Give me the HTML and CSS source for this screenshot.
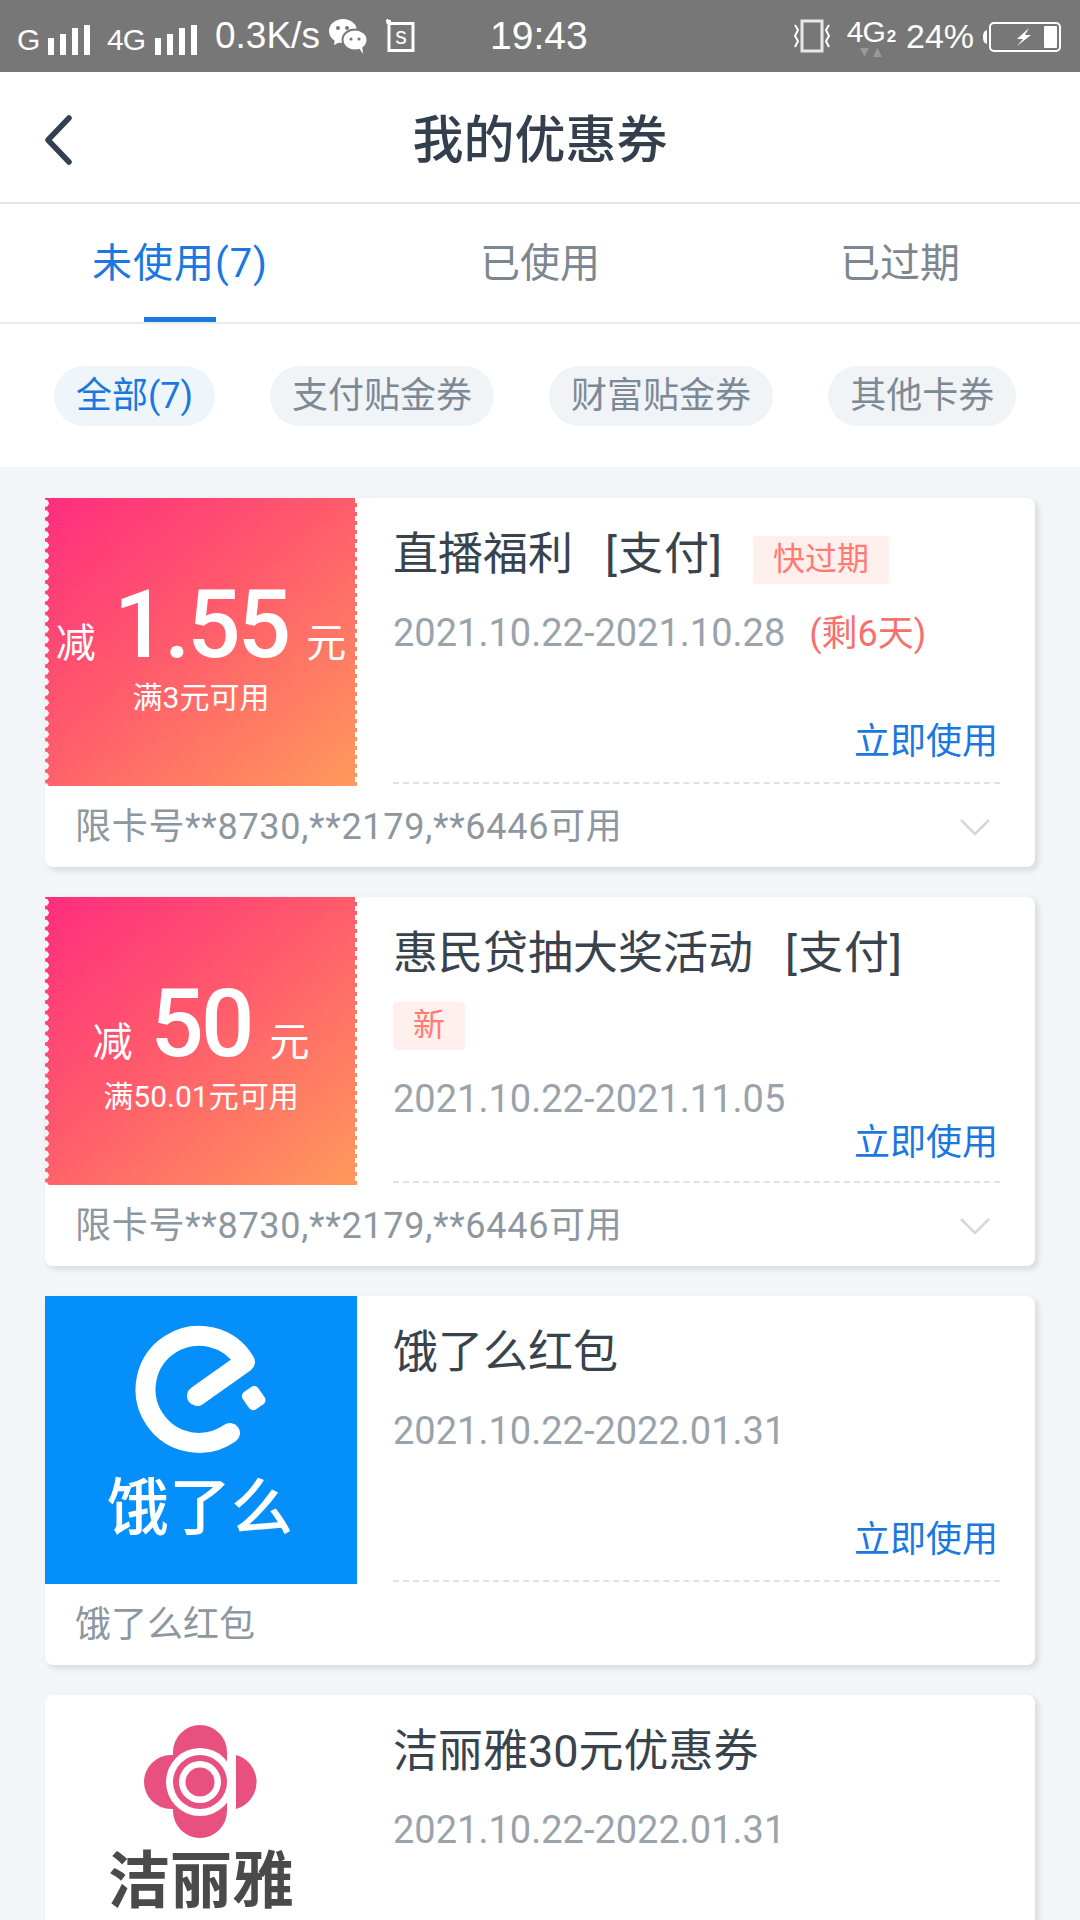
FILE: index.html
```html
<!DOCTYPE html>
<html lang="zh-CN">
<head>
<meta charset="UTF-8">
<meta name="viewport" content="width=device-width, initial-scale=1.0">
<title>我的优惠券</title>
<link rel="stylesheet" href="styles.css">
</head>
<body>

<!-- Status bar -->
<div class="status-bar">
  <span class="st-g">G</span>
  <svg class="st-signal" width="42" height="30" viewBox="0 0 42 30"><path d="M0 13h6v17H0zM12 9h6v21h-6zM24 3h6v27h-6zM36 0h6v30h-6z" fill="#fff"/></svg>
  <span class="st-4g">4G</span>
  <svg class="st-signal" width="42" height="30" viewBox="0 0 42 30"><path d="M0 13h6v17H0zM12 9h6v21h-6zM24 3h6v27h-6zM36 0h6v30h-6z" fill="#fff"/></svg>
  <span class="st-speed">0.3K/s</span>
  <svg class="st-wechat" width="38" height="35" viewBox="0 0 38 35">
    <ellipse cx="14" cy="12" rx="14" ry="12" fill="#fff"/>
    <path d="M6 19l-1 7 8-4z" fill="#fff"/>
    <ellipse cx="26" cy="21" rx="12.500" ry="10.500" fill="#fff" stroke="#777" stroke-width="2"/>
    <path d="M30 29l4 6-1-9z" fill="#fff"/>
    <circle cx="9" cy="9" r="2" fill="#777"/><circle cx="18" cy="9" r="2" fill="#777"/>
    <circle cx="22" cy="20" r="1.600" fill="#777"/><circle cx="30" cy="20" r="1.600" fill="#777"/>
  </svg>
  <svg class="st-sim" width="30" height="36" viewBox="0 0 30 36">
    <path d="M4 5.500h24v27H4z" fill="none" stroke="#fff" stroke-width="3"/>
    <path d="M1 3h5M2.500 1v5" fill="none" stroke="#fff" stroke-width="2"/>
    <text x="16" y="26" font-size="23" text-anchor="middle" fill="#fff" font-family="'Liberation Sans', sans-serif">s</text>
  </svg>
  <span class="st-time">19:43</span>
  <svg class="st-vibrate" width="38" height="34" viewBox="0 0 38 34">
    <rect x="9" y="2" width="20" height="30" fill="none" stroke="#e8e8e8" stroke-width="3"/>
    <path d="M2 6l3 5-3 6 3 5-3 6M36 6l-3 5 3 6-3 5 3 6" fill="none" stroke="#fff" stroke-width="2"/>
  </svg>
  <div class="st-net">
    <span class="st-net-txt">4G<small>2</small></span>
    <svg width="24" height="11" viewBox="0 0 24 11"><path d="M1 1h9l-4.500 9zM14 10h9l-4.500-9z" fill="#999"/></svg>
  </div>
  <span class="st-batt-txt">24%</span>
  <svg class="st-batt" width="78" height="30" viewBox="0 0 78 30">
    <path d="M4 8v14c-3-1-4-3-4-7s1-6 4-7z" fill="#fff"/>
    <rect x="7" y="1" width="70" height="28" rx="4" fill="none" stroke="#fff" stroke-width="2"/>
    <path d="M46 6l-12 11h6l-6 7 14-11h-6z" fill="#fff"/>
    <rect x="61" y="4" width="13" height="22" rx="1" fill="#fff"/>
  </svg>
</div>

<!-- Title bar -->
<div class="nav-bar">
  <svg class="nav-back" width="28" height="50" viewBox="0 0 28 50"><path d="M24 3L3 25l21 22" fill="none" stroke="#33404f" stroke-width="5.500" stroke-linecap="round" stroke-linejoin="round"/></svg>
  <div class="nav-title">我的优惠券</div>
</div>

<!-- Tabs -->
<div class="tabs">
  <div class="tab active">未使用(7)</div>
  <div class="tab">已使用</div>
  <div class="tab">已过期</div>
</div>

<!-- Filter chips -->
<div class="chips">
  <div class="chip active">全部(7)</div>
  <div class="chip">支付贴金券</div>
  <div class="chip">财富贴金券</div>
  <div class="chip">其他卡券</div>
</div>

<div class="coupon-list">

  <div class="coupon">
    <div class="coupon-main">
      <div class="coupon-left grad">
        <div class="amount"><span class="unit">减</span><span class="num">1.55</span><span class="unit">元</span></div>
        <div class="cond">满3元可用</div>
      </div>
      <div class="coupon-right">
        <div class="title-row">
          <span class="c-title">直播福利<span class="c-type">[支付]</span></span>
          <span class="tag">快过期</span>
        </div>
        <div class="c-date">2021.10.22-2021.10.28<span class="left-days">(剩6天)</span></div>
        <div class="use-btn">立即使用</div>
      </div>
    </div>
    <div class="coupon-foot">
      <span class="foot-txt">限卡号**8730,**2179,**6446可用</span>
      <svg class="foot-arrow" width="30" height="17" viewBox="0 0 30 17"><path d="M1 1l14 14L29 1" fill="none" stroke="#d5d7d9" stroke-width="2.500"/></svg>
    </div>
  </div>

  <div class="coupon">
    <div class="coupon-main">
      <div class="coupon-left grad">
        <div class="amount"><span class="unit">减</span><span class="num">50</span><span class="unit">元</span></div>
        <div class="cond">满50.01元可用</div>
      </div>
      <div class="coupon-right">
        <div class="title-row">
          <span class="c-title">惠民贷抽大奖活动<span class="c-type">[支付]</span></span>
          <span class="tag">新</span>
        </div>
        <div class="c-date">2021.10.22-2021.11.05</div>
        <div class="use-btn">立即使用</div>
      </div>
    </div>
    <div class="coupon-foot">
      <span class="foot-txt">限卡号**8730,**2179,**6446可用</span>
      <svg class="foot-arrow" width="30" height="17" viewBox="0 0 30 17"><path d="M1 1l14 14L29 1" fill="none" stroke="#d5d7d9" stroke-width="2.500"/></svg>
    </div>
  </div>

  <div class="coupon">
    <div class="coupon-main">
      <div class="coupon-left ele">
        <svg class="logo" width="312" height="288" viewBox="0 0 312 288">
          <path d="M185 137A53.500 53.500 0 1 1 200 66L152 100" fill="none" stroke="#fff" stroke-width="20" stroke-linecap="round" stroke-linejoin="round"/>
          <rect x="199" y="92" width="19" height="21" rx="5" fill="#fff" transform="rotate(-35 208 102)"/>
          <text x="155" y="234" font-size="62" font-weight="500" text-anchor="middle" fill="#fff" font-family="'Noto Sans CJK SC', sans-serif">饿了么</text>
        </svg>
      </div>
      <div class="coupon-right">
        <div class="title-row"><span class="c-title">饿了么红包</span></div>
        <div class="c-date">2021.10.22-2022.01.31</div>
        <div class="use-btn">立即使用</div>
      </div>
    </div>
    <div class="coupon-foot"><span>饿了么红包</span></div>
  </div>

  <div class="coupon">
    <div class="coupon-main">
      <div class="coupon-left">
        <svg class="logo" width="312" height="225" viewBox="0 0 312 225">
          <rect x="128" y="30" width="54" height="113" rx="27" fill="#e8507f"/>
          <rect x="99" y="60" width="83" height="54" rx="27" fill="#e8507f"/>
          <path d="M191 60A28 28 0 0 1 191 114Z" fill="#e8507f"/>
          <circle cx="155" cy="87" r="34" fill="#fff"/>
          <circle cx="155" cy="87" r="27" fill="#e8507f"/>
          <circle cx="155" cy="87" r="21" fill="#fff"/>
          <circle cx="155" cy="87" r="14.500" fill="#e8507f"/>
          <text x="156" y="208" font-size="62" font-weight="700" text-anchor="middle" fill="#4a4a4a" font-family="'Noto Sans CJK SC', sans-serif">洁丽雅</text>
        </svg>
      </div>
      <div class="coupon-right no-line">
        <div class="title-row"><span class="c-title">洁丽雅30元优惠券</span></div>
        <div class="c-date">2021.10.22-2022.01.31</div>
      </div>
    </div>
  </div>

</div>

</body>
</html>
```

FILE: styles.css
```css
html, body {
  margin: 0;
  height: 1920px;
  overflow: hidden;
}

body {
  background: #f3f6f8;
  font-family: Roboto, "Noto Sans CJK SC", sans-serif;
}

/* Status bar */
.status-bar {
  height: 72px;
  background: #777777;
  color: #fff;
  display: flex;
  align-items: center;
  box-sizing: border-box;
  padding-left: 17px;
  font-family: "Liberation Sans", sans-serif;
}

.status-bar svg { flex: none; }

.st-g { font-size: 30px; margin-top: 8px; width: 31px; }
.st-signal { margin-top: 8px; }
.st-4g { font-size: 30px; margin: 8px 0 0 17px; width: 48px; letter-spacing: -1px; }
.st-speed { font-size: 37px; margin-left: 18px; width: 114px; }
.st-sim { margin-left: 18px; }
.st-time { font-size: 39px; margin-left: 75px; width: 98px; }
.st-vibrate { margin-left: 205px; }
.st-net {
  margin: 3px 0 0 16px;
  width: 48px;
  display: flex;
  flex-direction: column;
  align-items: center;
  line-height: 1;
}
.st-net-txt { font-size: 30px; letter-spacing: -1px; }
.st-net-txt small { font-size: 17px; font-weight: 700; margin-left: 2px; }
.st-batt-txt { font-size: 34px; margin-left: 11px; width: 77px; }
.st-batt { margin-top: 2px; }

/* Title bar */
.nav-bar {
  height: 132px;
  box-sizing: border-box;
  padding-bottom: 3px;
  background: #fff;
  border-bottom: 2px solid #e4e6e8;
  display: flex;
  align-items: center;
  justify-content: center;
  position: relative;
}

.nav-back {
  position: absolute;
  left: 45px;
  top: 43px;
}

.nav-title {
  font-size: 51px;
  font-weight: 500;
  color: #333f4d;
}

/* Tabs */
.tabs {
  height: 120px;
  box-sizing: border-box;
  background: #fff;
  border-bottom: 2px solid #e8eaec;
  display: flex;
}

.tab {
  flex: 1;
  display: flex;
  align-items: center;
  justify-content: center;
  padding-bottom: 6px;
  font-size: 40px;
  color: #7d8790;
  position: relative;
}

.tab.active {
  color: #1a78e0;
  letter-spacing: 1px;
}

.tab.active::after {
  content: "";
  position: absolute;
  left: 144px;
  bottom: 0;
  width: 72px;
  height: 5px;
  background: #1a78e0;
}

/* Chips */
.chips {
  height: 143px;
  background: #fff;
  display: flex;
  align-items: center;
  padding: 0 54px;
  gap: 55px;
  box-sizing: border-box;
}

.chip {
  height: 60px;
  line-height: 60px;
  padding: 0 22px;
  border-radius: 30px;
  font-size: 36px;
  color: #7d8a96;
  background: #f1f4f7;
  white-space: nowrap;
}

.chip.active {
  color: #1a78e0;
  background: #eef5fb;
}

/* Coupons */
.coupon-list {
  padding: 31px 45px;
  display: flex;
  flex-direction: column;
  gap: 30px;
}

.coupon {
  background: #fff;
  border-radius: 8px;
  box-shadow: 3px 3px 6px rgba(0, 0, 0, 0.12);
  flex: none;
}

.coupon-main {
  display: flex;
  height: 288px;
}

.coupon-left {
  width: 312px;
  flex: none;
  position: relative;
  color: #fff;
  display: flex;
  flex-direction: column;
  align-items: center;
}

.coupon-left.ele { background: #058ffb; }

.coupon-left.grad {
  box-sizing: border-box;
  padding-top: 77px;
  background: linear-gradient(140deg, #ff2d7e 0%, #ff5a6c 45%, #ff9a5c 100%);
}

/* perforated edges */
.coupon-left.grad::before {
  content: "";
  position: absolute;
  left: 0;
  top: 0;
  bottom: 0;
  width: 4px;
  background: radial-gradient(circle at 0 50%, #f3f6f8 3.500px, transparent 4px) 0 0 / 4px 10.500px repeat-y;
}

.coupon-left.grad::after {
  content: "";
  position: absolute;
  right: 0;
  top: 0;
  bottom: 0;
  width: 2px;
  background: repeating-linear-gradient(180deg, #fff 0, #fff 5px, transparent 5px, transparent 9px);
}

.logo { display: block; }

.amount {
  display: flex;
  align-items: baseline;
  justify-content: center;
  gap: 18px;
  line-height: 100px;
}

.num {
  font-size: 94px;
  font-weight: 500;
  letter-spacing: -3px;
}

.unit { font-size: 40px; }

.cond {
  font-size: 30px;
  line-height: 36px;
  margin-top: -14px;
}

.coupon-right {
  flex: 1;
  min-width: 0;
  margin: 0 35px 2px 36px;
  padding-top: 29px;
  border-bottom: 2px dashed #dfe1e3;
  display: flex;
  flex-direction: column;
  box-sizing: border-box;
}

.coupon-right.no-line { border-bottom: none; }

.title-row {
  display: flex;
  flex-wrap: wrap;
  align-items: flex-start;
  column-gap: 30px;
  row-gap: 11px;
}

.c-title {
  font-size: 45px;
  line-height: 56px;
  color: #39434d;
}

.c-type {
  margin-left: 32px;
  letter-spacing: 1px;
}

.tag {
  height: 48px;
  line-height: 46px;
  margin: 9px 0 -1px;
  padding: 0 20px;
  font-size: 32px;
  color: #ff7b73;
  background: #fff0ee;
  border-radius: 4px;
}

.c-date {
  font-size: 38px;
  line-height: 44px;
  margin-top: 28px;
  color: #9aa3ab;
}

.left-days {
  color: #f5716c;
  margin-left: 24px;
  font-size: 36px;
}

.use-btn {
  margin-top: auto;
  margin-bottom: 18px;
  align-self: flex-end;
  margin-right: 2px;
  font-size: 36px;
  line-height: 44px;
  color: #1a78e0;
}

.coupon-foot {
  height: 81px;
  box-sizing: border-box;
  padding: 0 45px 8px 30px;
  display: flex;
  align-items: center;
  justify-content: space-between;
  font-size: 36px;
  color: #8d979f;
}

.foot-txt { letter-spacing: 0.7px; }
.foot-arrow { margin-top: 10px; }
```
